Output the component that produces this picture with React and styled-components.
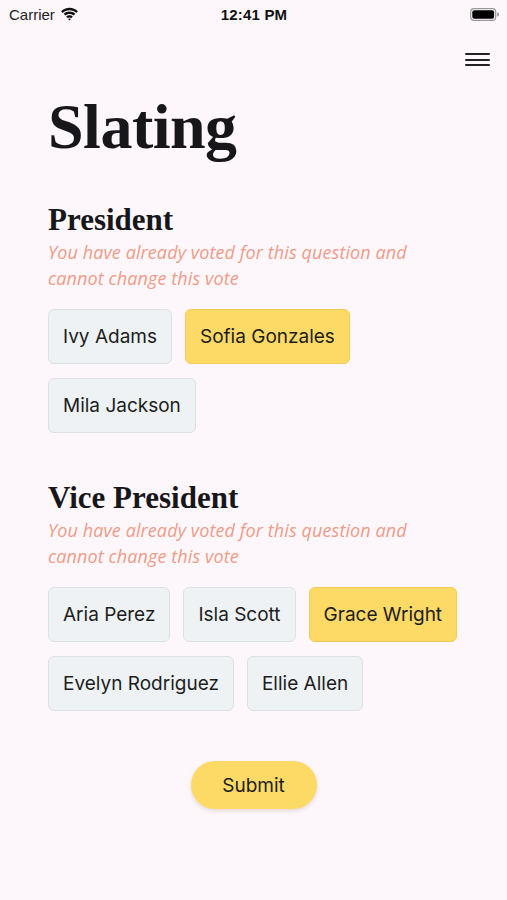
import React from "react";
import styled, { createGlobalStyle } from "styled-components";

const Global = createGlobalStyle`
  html, body { margin: 0; padding: 0; background: #fdf7fc; }
  body { width: 507px; min-height: 900px; font-family: "Inter", "Noto Sans", sans-serif; }
  * { box-sizing: border-box; }
`;

const Screen = styled.div`
  width: 507px;
  min-height: 900px;
  background: #fdf7fc;
  display: flex;
  flex-direction: column;
`;

const StatusBar = styled.div`
  height: 28px;
  display: grid;
  grid-template-columns: 1fr auto 1fr;
  align-items: center;
  padding: 0 8px 0 9px;
  font-family: "Liberation Sans", Arial, sans-serif;
  font-size: 15px;
  color: #111;
`;

const Carrier = styled.div`
  display: flex;
  align-items: center;
  gap: 5px;
  color: #222;
`;

const Time = styled.div`
  font-weight: 700;
  letter-spacing: 0.2px;
`;

const BatteryWrap = styled.div`
  display: flex;
  justify-content: flex-end;
`;

const MenuRow = styled.div`
  display: flex;
  justify-content: flex-end;
  padding: 25px 17px 0 0;
`;

const MenuButton = styled.button`
  width: 25px;
  height: 13px;
  padding: 0;
  border: none;
  background: transparent;
  display: flex;
  flex-direction: column;
  justify-content: space-between;
  cursor: pointer;
`;

const MenuLine = styled.span`
  display: block;
  height: 2px;
  width: 100%;
  background: #222;
  border-radius: 1px;
`;

const Content = styled.main`
  padding: 0 48px;
  display: flex;
  flex-direction: column;
`;

const Title = styled.h1`
  margin: 30px 0 0;
  font-family: "Liberation Serif", "Times New Roman", serif;
  font-weight: 700;
  font-size: 64px;
  line-height: 62px;
  letter-spacing: -0.5px;
  color: #17171b;
`;

const Section = styled.section`
  margin-top: ${(p) => p.$top}px;
  display: flex;
  flex-direction: column;
`;

const Heading = styled.h2`
  margin: 0;
  font-family: "Liberation Serif", "Times New Roman", serif;
  font-weight: 700;
  font-size: 31px;
  line-height: 36px;
  color: #17171b;
`;

const Notice = styled.p`
  margin: 1px 0 0;
  font-family: "Open Sans", "Noto Sans", sans-serif;
  font-style: italic;
  font-weight: 400;
  font-size: 18px;
  line-height: 26px;
  letter-spacing: 0.1px;
  color: #ef9c88;
`;

const Options = styled.div`
  margin: 18px -10px 0 0;
  display: flex;
  flex-wrap: wrap;
  column-gap: 13px;
  row-gap: 14px;
`;

const Option = styled.button`
  height: 55px;
  padding: 0 14px;
  border-radius: 6px;
  border: 1px solid ${(p) => (p.$selected ? "#f3cb55" : "#dce1e4")};
  background: ${(p) => (p.$selected ? "#fdd966" : "#eef2f4")};
  font-family: "Inter", "Noto Sans", sans-serif;
  font-size: 19px;
  color: #1d1d1d;
  cursor: pointer;
`;

const SubmitRow = styled.div`
  display: flex;
  justify-content: center;
  margin-top: 50px;
`;

const Submit = styled.button`
  width: 126px;
  height: 48px;
  border-radius: 24px;
  border: none;
  background: #fdd966;
  box-shadow: 0 2px 4px rgba(120, 90, 20, 0.18);
  font-family: "Inter", "Noto Sans", sans-serif;
  font-size: 19px;
  color: #1d1d1d;
  cursor: pointer;
`;

const Wifi = () => (
  <svg width="19" height="14" viewBox="0 0 19 14">
    <path d="M9.5 3.2c2.6 0 5 1 6.8 2.7l1.6-1.7C15.7 2.1 12.7.8 9.5.8S3.3 2.1 1.1 4.2l1.6 1.7C4.5 4.2 6.9 3.2 9.5 3.2z" fill="#111" />
    <path d="M9.5 6.9c1.6 0 3.1.6 4.2 1.6l1.6-1.7C13.8 5.4 11.7 4.6 9.5 4.6S5.2 5.4 3.7 6.8l1.6 1.7c1.1-1 2.6-1.6 4.2-1.6z" fill="#111" />
    <path d="M9.5 10.5c.7 0 1.3.3 1.7.7l1.6-1.7c-.9-.8-2-1.3-3.3-1.3s-2.4.5-3.3 1.3l1.6 1.7c.4-.4 1-.7 1.7-.7zM9.5 13.6l1.5-1.6c-.4-.4-.9-.6-1.5-.6s-1.1.2-1.5.6z" fill="#111" />
  </svg>
);

const Battery = () => (
  <svg width="29" height="13" viewBox="0 0 29 13">
    <rect x="0.7" y="0.7" width="25" height="11.6" rx="3.3" fill="none" stroke="#999" strokeWidth="1.2" />
    <rect x="2.3" y="2.3" width="21.8" height="8.4" rx="2" fill="#000" />
    <path d="M27.2 4.5v4a2 2 0 0 0 0-4z" fill="#999" />
  </svg>
);

const sections = [
  {
    title: "President",
    top: 44,
    options: [
      { name: "Ivy Adams" },
      { name: "Sofia Gonzales", selected: true },
      { name: "Mila Jackson" },
    ],
  },
  {
    title: "Vice President",
    top: 47,
    options: [
      { name: "Aria Perez" },
      { name: "Isla Scott" },
      { name: "Grace Wright", selected: true },
      { name: "Evelyn Rodriguez" },
      { name: "Ellie Allen" },
    ],
  },
];

export default function App() {
  return (
    <Screen>
      <Global />
      <StatusBar>
        <Carrier>
          Carrier <Wifi />
        </Carrier>
        <Time>12:41 PM</Time>
        <BatteryWrap>
          <Battery />
        </BatteryWrap>
      </StatusBar>
      <MenuRow>
        <MenuButton aria-label="Menu">
          <MenuLine />
          <MenuLine />
          <MenuLine />
        </MenuButton>
      </MenuRow>
      <Content>
        <Title>Slating</Title>
        {sections.map((s) => (
          <Section key={s.title} $top={s.top}>
            <Heading>{s.title}</Heading>
            <Notice>
              You have already voted for this question and
              <br />
              cannot change this vote
            </Notice>
            <Options>
              {s.options.map((o) => (
                <Option key={o.name} $selected={o.selected}>
                  {o.name}
                </Option>
              ))}
            </Options>
          </Section>
        ))}
        <SubmitRow>
          <Submit>Submit</Submit>
        </SubmitRow>
      </Content>
    </Screen>
  );
}
